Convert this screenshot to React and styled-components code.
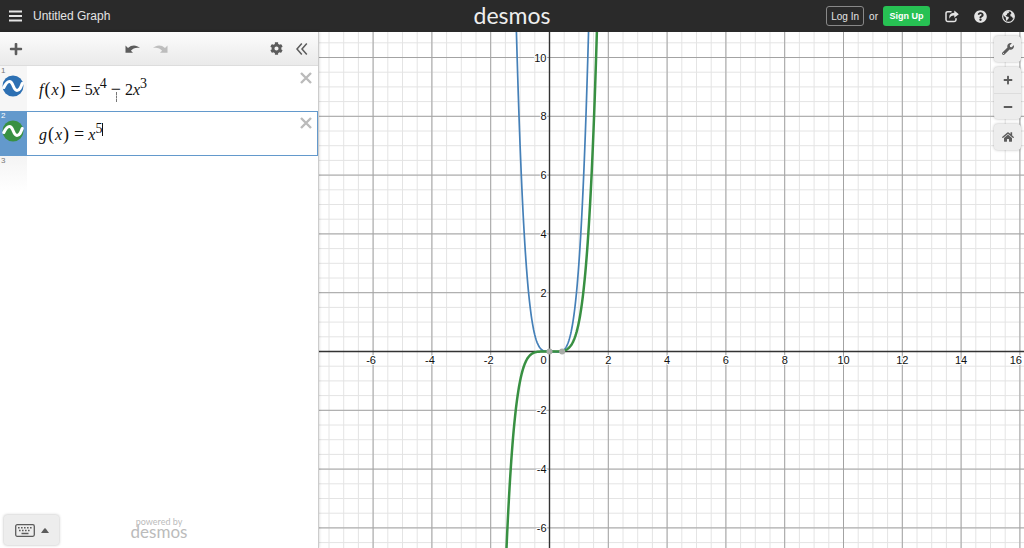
//Modules
import React from "react"
import styled, { createGlobalStyle, css } from "styled-components"
//Icons
import { FaCog, FaHome, FaMinus, FaPlus, FaQuestionCircle, FaWrench } from "react-icons/fa"

const colors = {
  header: "#2a2a2a",
  blue: "#2d70b3",
  green: "#389042",
  selected: "#6399cc",
  icon: "#5c5c5c",
}

const UNIT = 29.4
const ORIGIN = { x: 230.5, y: 319.5 }
const GRAPH = { width: 705, height: 516 }

const toX = x => ORIGIN.x + x * UNIT
const toY = y => ORIGIN.y - y * UNIT
const range = (from, to, step) =>
  Array.from({ length: Math.round((to - from) / step) + 1 }, (_, i) => from + i * step)

const plot = (fn, from, to) =>
  range(from, to, 0.02)
    .map((x, i) => `${i ? "L" : "M"}${toX(x).toFixed(2)} ${toY(fn(x)).toFixed(2)}`)
    .join("")

const App = () => {
  return (
    <Page>
      <GlobalStyle />
      <Header>
        <HeaderSide>
          <IconButton aria-label="Open graph menu">
            <MenuIcon />
          </IconButton>
          <Title>Untitled Graph</Title>
        </HeaderSide>
        <Logo href="#">desmos</Logo>
        <HeaderSide $end>
          <LogIn>Log In</LogIn>
          <Or>or</Or>
          <SignUp>Sign Up</SignUp>
          <HeaderIcons>
            <IconButton aria-label="Share graph">
              <ShareIcon />
            </IconButton>
            <IconButton aria-label="Help">
              <FaQuestionCircle size={13} />
            </IconButton>
            <IconButton aria-label="Language">
              <GlobeIcon />
            </IconButton>
          </HeaderIcons>
        </HeaderSide>
      </Header>

      <Main>
        <Sidebar>
          <Toolbar>
            <IconButton aria-label="Add item">
              <FaPlus size={14} />
            </IconButton>
            <ToolGroup>
              <IconButton aria-label="Undo">
                <UndoIcon />
              </IconButton>
              <IconButton aria-label="Redo" $faded>
                <UndoIcon flip />
              </IconButton>
            </ToolGroup>
            <ToolGroup>
              <IconButton aria-label="Edit list">
                <FaCog size={13} />
              </IconButton>
              <IconButton aria-label="Hide list">
                <CollapseIcon />
              </IconButton>
            </ToolGroup>
          </Toolbar>

          <Expressions>
            <Expression>
              <Tab>
                <Index>1</Index>
                <CurveButton color={colors.blue} label="Hide f(x)" />
              </Tab>
              <Formula>
                <i>f</i>
                <Paren>(</Paren>
                <i>x</i>
                <Paren>)</Paren>
                <Operator>=</Operator>5<i>x</i>
                <sup>4</sup>
                <Operator>
                  −<Pointer />
                </Operator>
                2<i>x</i>
                <sup>3</sup>
              </Formula>
              <Remove aria-label="Delete expression 1">
                <CrossIcon />
              </Remove>
            </Expression>
            <Expression $selected>
              <Tab $selected>
                <Index>2</Index>
                <CurveButton color={colors.green} label="Hide g(x)" />
              </Tab>
              <Formula>
                <i>g</i>
                <Paren>(</Paren>
                <i>x</i>
                <Paren>)</Paren>
                <Operator>=</Operator>
                <i>x</i>
                <sup>5</sup>
                <Caret />
              </Formula>
              <Remove aria-label="Delete expression 2">
                <CrossIcon />
              </Remove>
            </Expression>
            <Expression $empty>
              <Tab $empty>
                <Index>3</Index>
              </Tab>
            </Expression>
          </Expressions>

          <SidebarFooter>
            <KeypadButton aria-label="Show keypad">
              <KeyboardIcon />
              <UpIcon />
            </KeypadButton>
            <PoweredBy href="#">
              <small>powered by</small>
              <span>desmos</span>
            </PoweredBy>
          </SidebarFooter>
        </Sidebar>

        <GraphPanel>
          <Graph />
          <GraphControls>
            <ControlGroup>
              <button aria-label="Graph settings">
                <FaWrench size={12} />
              </button>
            </ControlGroup>
            <ControlGroup>
              <button aria-label="Zoom in">
                <FaPlus size={10} />
              </button>
              <button aria-label="Zoom out">
                <FaMinus size={10} />
              </button>
            </ControlGroup>
            <ControlGroup>
              <button aria-label="Default viewport">
                <FaHome size={12} />
              </button>
            </ControlGroup>
          </GraphControls>
        </GraphPanel>
      </Main>
    </Page>
  )
}

const Graph = () => {
  const lines = (values, vertical) =>
    values
      .map(v => (vertical ? `M${toX(v)} 0V${GRAPH.height}` : `M0 ${toY(v)}H${GRAPH.width}`))
      .join("")

  const minor = lines(range(-8, 17, 0.5), true) + lines(range(-7, 11, 0.5), false)
  const major = lines(range(-6, 16, 2), true) + lines(range(-6, 10, 2), false)

  return (
    <GraphSvg
      viewBox={`0 0 ${GRAPH.width} ${GRAPH.height}`}
      preserveAspectRatio="xMinYMin slice"
      role="img"
      aria-label="Graph of f and g"
    >
      <path d={minor} stroke="#e4e4e4" />
      <path d={major} stroke="#a3a3a3" />
      <path d={lines([0], true) + lines([0], false)} stroke="#333" strokeWidth="1.4" />
      {range(-6, 16, 2)
        .filter(v => v !== 0)
        .map(v => (
          <text
            key={v}
            x={v === 16 ? GRAPH.width - 2 : toX(v) - (v < 0 ? 2 : 0)}
            y={toY(0) + 12}
            textAnchor={v === 16 ? "end" : "middle"}
          >
            {v}
          </text>
        ))}
      {range(-6, 10, 2)
        .filter(v => v !== 0)
        .map(v => (
          <text key={v} x={toX(0) - 3} y={toY(v) + 4} textAnchor="end">
            {v}
          </text>
        ))}
      <text x={toX(0) - 3} y={toY(0) + 12} textAnchor="end">
        0
      </text>
      <path d={plot(x => 5 * x ** 4 - 2 * x ** 3, -1.2, 1.4)} stroke="#4580b8" strokeWidth="1.7" />
      <path d={plot(x => x ** 5, -1.5, 1.66)} stroke={colors.green} strokeWidth="2.5" />
      <circle cx={toX(0)} cy={toY(0)} r="3" fill="#a8aca8" />
      <circle cx={toX(0.43)} cy={toY(0)} r="3" fill="#a8aca8" />
    </GraphSvg>
  )
}

const MenuIcon = () => (
  <svg width="13" height="12" viewBox="0 0 13 12" fill="none" stroke="currentColor" strokeWidth="2">
    <path d="M0 1.5h13M0 6h13M0 10.5h13" />
  </svg>
)

const ShareIcon = () => (
  <svg width="14" height="13" viewBox="0 0 14 13" fill="none" stroke="currentColor">
    <path
      d="M6 1.7H2.7Q1 1.7 1 3.4v6.4q0 1.7 1.7 1.7h6.6q1.7 0 1.7-1.7V8.8"
      strokeWidth="1.5"
      strokeLinecap="round"
    />
    <path
      d="M9.3.6 13.8 4.2 9.3 7.8V5.5C6.8 5.4 5.3 6.2 4.600 8.800 3.600 5.200 5.600 2.900 9.300 2.800z"
      fill="currentColor"
      stroke="none"
    />
  </svg>
)

const GlobeIcon = () => (
  <svg width="13" height="13" viewBox="0 0 13 13" fill="none" stroke="currentColor">
    <circle cx="6.5" cy="6.5" r="5.8" strokeWidth="1.2" />
    <path
      d="M2 2.6 5.5.9 7.3 1.6 6.600 3 5.200 3.600 4.800 5 3.400 5.500 4.700 6.400 6.800 7 6.500 8.700 5.200 10 4.900 11.400 3.900 9.600 3.800 7.600 2 6 1.200 4.400zM8.500 1.200 11 2.800 12.200 5.200 12 7.600 10.900 8.600 10 6.800 8.500 6.200 8.300 4.400 9.500 3.300z"
      fill="currentColor"
      stroke="none"
    />
  </svg>
)

const UndoIcon = ({ flip }) => (
  <svg width="15" height="10" viewBox="0 0 15 10" fill="currentColor">
    <g transform={flip ? "translate(15 0) scale(-1 1)" : undefined}>
      <path d="M.5 1.5v7.300H8L5.900 6.700C8 4.200 11 3.200 15 4 11.500.600 6.700.500 3 3.900z" />
    </g>
  </svg>
)

const CollapseIcon = () => (
  <svg width="12" height="12" viewBox="0 0 12 12" fill="none" stroke="currentColor" strokeWidth="1.5">
    <path d="M5.8.6 1 6l4.800 5.400M10.800.6 6 6l4.800 5.400" />
  </svg>
)

const CrossIcon = () => (
  <svg width="12" height="12" viewBox="0 0 12 12" fill="none" stroke="currentColor" strokeWidth="2.4">
    <path d="M1 1l10 10M11 1 1 11" />
  </svg>
)

const KeyboardIcon = () => (
  <svg width="20" height="13" viewBox="0 0 20 13" fill="none" stroke="currentColor">
    <rect x=".7" y=".7" width="18.6" height="11.6" rx="1.5" strokeWidth="1.3" />
    <path d="M3 3.7h14M4 6.5h12" strokeWidth="1.6" strokeDasharray="1.6 1.4" />
    <path d="M6.500 9.500h7" strokeWidth="1.5" />
  </svg>
)

const UpIcon = () => (
  <svg width="8" height="5" viewBox="0 0 8 5" fill="currentColor">
    <path d="M0 5 3.300.500q.7-.7 1.400 0L8 5z" />
  </svg>
)

const CurveButton = ({ color, label }) => (
  <Curve aria-label={label}>
    <svg width="22" height="22" viewBox="0 0 22 22" fill="none">
      <circle cx="11" cy="11" r="10.5" fill={color} />
      <path
        d="M1.800 12.500C3.500 9 5 6.500 7.500 6.500c4 0 3.500 9 7.500 9 2.700 0 3.800-3 5.200-7"
        stroke="#fff"
        strokeWidth="3"
        strokeLinecap="round"
      />
    </svg>
  </Curve>
)

const GlobalStyle = createGlobalStyle`
  * {
    box-sizing: border-box;
  }

  body {
    margin: 0;
    background: white;
    font-family: "Liberation Sans", Arial, sans-serif;
  }

  button {
    padding: 0;
    border: none;
    background: none;
    color: inherit;
    font: inherit;
    cursor: pointer;
  }

  a {
    text-decoration: none;
  }

  svg {
    display: block;
  }
`

const Page = styled.div`
  display: flex;
  flex-direction: column;
  height: 100vh;
  overflow: hidden;
`

const Header = styled.header`
  display: grid;
  grid-template-columns: 1fr auto 1fr;
  align-items: center;
  flex: none;
  height: 32px;
  padding: 0 9px;
  background: ${colors.header};
  color: #e4e4e4;
`

const HeaderSide = styled.div`
  display: flex;
  align-items: center;
  justify-content: ${({ $end }) => ($end ? "flex-end" : "flex-start")};
  gap: ${({ $end }) => ($end ? "5px" : "11px")};
`

const Title = styled.span`
  font-size: 12px;
`

const Logo = styled.a`
  padding-bottom: 2px;
  color: #eee;
  font-family: Lato, sans-serif;
  font-size: 23px;
  line-height: 28px;
`

const IconButton = styled.button`
  display: flex;
  align-items: center;
  justify-content: center;
  opacity: ${({ $faded }) => ($faded ? 0.35 : 1)};
`

const authButton = css`
  height: 20px;
  border-radius: 3px;
  white-space: nowrap;
`

const LogIn = styled.button`
  ${authButton};
  width: 38px;

  && {
    border: 1px solid #888;
    font-size: 10px;
  }
`

const Or = styled.span`
  font-size: 10px;
`

const SignUp = styled.button`
  ${authButton};
  width: 47px;

  && {
    background: #27c153;
    color: white;
    font-size: 9px;
    font-weight: bold;
  }
`

const HeaderIcons = styled.div`
  display: flex;
  align-items: center;
  gap: 15px;
  margin-left: 10px;
`

const Main = styled.main`
  display: flex;
  flex: 1;
  min-height: 0;
`

const Sidebar = styled.aside`
  display: flex;
  flex-direction: column;
  flex: none;
  width: 319px;
  border-right: 1px solid #ccc;
  background: white;
  box-shadow: 0 0 3px rgba(0, 0, 0, 0.2);
  z-index: 1;
`

const Toolbar = styled.div`
  display: flex;
  align-items: center;
  justify-content: space-between;
  flex: none;
  height: 34px;
  padding: 0 10px 0 9px;
  border-bottom: 1px solid #ddd;
  background: linear-gradient(#fcfcfc, #eaeaea);
  color: ${colors.icon};
`

const ToolGroup = styled.div`
  display: flex;
  align-items: center;
  gap: 13px;
`

const Expressions = styled.div`
  flex: 1;
`

const Expression = styled.div`
  display: flex;
  height: ${({ $empty }) => ($empty ? "36px" : "45px")};
  box-shadow: ${({ $selected }) => ($selected ? `inset 0 0 0 1px ${colors.selected}` : "none")};
`

const Tab = styled.div`
  display: flex;
  flex-direction: column;
  flex: none;
  width: 27px;
  padding: 1px 2px 1px 1px;
  background: ${({ $selected, $empty }) =>
    $selected ? colors.selected : $empty ? "linear-gradient(#f4f4f4, #fff)" : "#f6f6f6"};
  color: ${({ $selected }) => ($selected ? "white" : "#777")};
`

const Index = styled.span`
  font-size: 8px;
  line-height: 8px;
`

const Curve = styled.button`
  align-self: center;
`

const Formula = styled.div`
  display: flex;
  align-items: center;
  flex: 1;
  padding: 2px 0 0 12px;
  color: #111;
  font-family: "Liberation Serif", "Times New Roman", serif;
  font-size: 16px;

  sup {
    padding-bottom: 12px;
    font-size: 14px;
    line-height: 14px;
  }
`

const Paren = styled.span`
  padding: 0 1px;
  font-size: 18px;
`

const Operator = styled.span`
  position: relative;
  padding: 0 4px;
  font-size: 18px;
`

const Pointer = styled.span`
  position: absolute;
  top: 13px;
  left: 50%;
  height: 10px;
  border-left: 1px dashed #777;
`

const Caret = styled.span`
  width: 1px;
  height: 13px;
  margin-bottom: 10px;
  background: #111;
`

const Remove = styled.button`
  align-self: flex-start;

  && {
    padding: 6px;
    color: #bbb;
  }
`

const SidebarFooter = styled.div`
  display: grid;
  grid-template-columns: 1fr auto 1fr;
  align-items: center;
  padding: 0 4px 3px;
`

const KeypadButton = styled.button`
  display: flex;
  align-items: center;
  justify-content: center;
  gap: 6px;
  width: 55px;
  height: 30px;

  && {
    border-radius: 3px;
    background: #ededed;
    color: ${colors.icon};
    box-shadow: 0 0 3px rgba(0, 0, 0, 0.3);
  }
`

const PoweredBy = styled.a`
  display: flex;
  flex-direction: column;
  align-items: center;
  padding-bottom: 6px;
  color: #bbb;
  font-family: Lato, sans-serif;
  font-size: 17px;
  line-height: 12px;

  small {
    font-size: 9px;
    line-height: 9px;
  }
`

const GraphPanel = styled.section`
  display: grid;
  flex: 1;
  min-width: 0;

  > * {
    grid-area: 1 / 1;
  }
`

const GraphSvg = styled.svg`
  width: 100%;
  height: 100%;
  min-height: 0;
  fill: none;

  text {
    fill: #111;
    font-size: 11px;
    stroke: white;
    stroke-width: 2px;
    paint-order: stroke;
  }
`

const GraphControls = styled.div`
  display: flex;
  flex-direction: column;
  gap: 5px;
  justify-self: end;
  align-self: start;
  padding: 4px 3px 0 0;
`

const ControlGroup = styled.div`
  border-radius: 4px;
  background: #ededed;
  box-shadow: 0 0 3px rgba(0, 0, 0, 0.3);

  button {
    display: flex;
    align-items: center;
    justify-content: center;
    width: 27px;
    height: 26px;
    color: ${colors.icon};
  }

  button + button {
    border-top: 1px solid #ddd;
  }
`

export default App
